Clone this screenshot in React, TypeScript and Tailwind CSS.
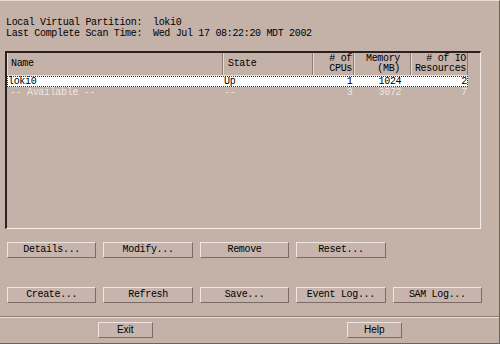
import React from 'react'

const mono = { fontFamily: '"Liberation Mono", "DejaVu Sans Mono", monospace' }

const cols = [
  { key: 'name', w: 'w-[216px]', align: 'text-left pl-[3px]', head: ['Name'] },
  { key: 'state', w: 'w-[90px]', align: 'text-left pl-[4px]', head: ['State'] },
  { key: 'cpu', w: 'w-[41px]', align: 'text-right pr-[1px]', head: ['# of', 'CPUs'] },
  { key: 'mem', w: 'w-[57px]', align: 'text-right pr-[10px]', head: ['Memory', '(MB)'] },
  { key: 'io', w: 'w-[57px]', align: 'text-right pr-[1px]', head: ['# of IO', 'Resources'] },
]

const rows = [
  { name: 'loki0', state: 'Up', cpu: '1', mem: '1024', io: '2', selected: true },
  { name: '-- Available --', state: '--', cpu: '3', mem: '3072', io: '7', selected: false },
]

function Btn({ label, sans }: { label: string; sans?: boolean }) {
  return (
    <button
      className="flex h-[16px] w-full items-center justify-center border border-t-[#efe6e1] border-l-[#efe6e1] border-b-[#7a6b65] border-r-[#7a6b65] bg-[#c7b4ac] text-[10px] leading-none text-black tracking-[-0.33px]"
      style={sans ? { fontFamily: '"Liberation Sans", Arial, sans-serif', letterSpacing: 0 } : mono}
    >
      {label}
    </button>
  )
}

export default function App() {
  return (
    <div
      className="flex h-[344px] w-[500px] flex-col overflow-hidden border-t border-r border-b border-t-[#e9ddd6] border-r-[#6f635e] border-b-[#6f635e] bg-[#c4b1a8] text-black"
      style={mono}
    >
      <div className="pl-[6px] pt-[16px] text-[10px] leading-[11px] tracking-[-0.33px]">
        <div className="flex">
          <span className="w-[147px]">Local Virtual Partition:</span>
          <span>loki0</span>
        </div>
        <div className="flex">
          <span className="w-[147px]">Last Complete Scan Time:</span>
          <span>Wed Jul 17 08:22:20 MDT 2002</span>
        </div>
      </div>

      <div className="ml-[5px] mt-[12px] h-[178px] w-[476px] border-t-2 border-l-2 border-r border-b border-t-[#2a2220] border-l-[#2a2220] border-r-[#f3ece8] border-b-[#f3ece8]">
        <div className="flex h-[23px] w-[461px] border-b border-b-[#e9ddd6]">
          {cols.map((c) => (
            <div
              key={c.key}
              className={`${c.w} ${c.align} flex flex-col justify-center border-r border-r-[#8a7b74] border-l border-l-[#e6dad3] text-[10px] leading-[10px] tracking-[-0.33px]`}
            >
              {c.head.map((h) => (
                <span key={h}>{h}</span>
              ))}
            </div>
          ))}
        </div>
        {rows.map((r) => (
          <div
            key={r.name}
            className={`flex h-[11px] w-[461px] text-[10px] leading-[10px] tracking-[-0.33px] ${
              r.selected ? 'border border-dotted border-[#333] bg-white text-black' : 'border border-transparent text-[#efe7e3]'
            }`}
          >
            <span className={`w-[216px] ${r.selected ? 'pl-[0px]' : 'pl-[2px]'}`}>{r.name}</span>
            <span className="w-[90px] pl-[1px]">{r.state}</span>
            <span className="w-[41px] pr-[1px] text-right">{r.cpu}</span>
            <span className="w-[57px] pr-[9px] text-right">{r.mem}</span>
            <span className="w-[57px] pr-[0px] text-right">{r.io}</span>
          </div>
        ))}
      </div>

      <div className="ml-[7px] mt-[13px] grid w-[475px] grid-cols-5 gap-x-[7px]">
        <Btn label="Details..." />
        <Btn label="Modify..." />
        <Btn label="Remove" />
        <Btn label="Reset..." />
      </div>

      <div className="ml-[7px] mt-[29px] grid w-[475px] grid-cols-5 gap-x-[7px]">
        <Btn label="Create..." />
        <Btn label="Refresh" />
        <Btn label="Save..." />
        <Btn label="Event Log..." />
        <Btn label="SAM Log..." />
      </div>

      <div className="mt-[13px] h-[2px] w-full border-t border-b border-t-[#8a7b74] border-b-[#ece2dc]" />

      <div className="mt-[4px] grid grid-cols-2">
        <div className="flex justify-center pl-[1px]">
          <div className="w-[55px]">
            <Btn label="Exit" sans />
          </div>
        </div>
        <div className="flex justify-center">
          <div className="w-[55px]">
            <Btn label="Help" sans />
          </div>
        </div>
      </div>
    </div>
  )
}
